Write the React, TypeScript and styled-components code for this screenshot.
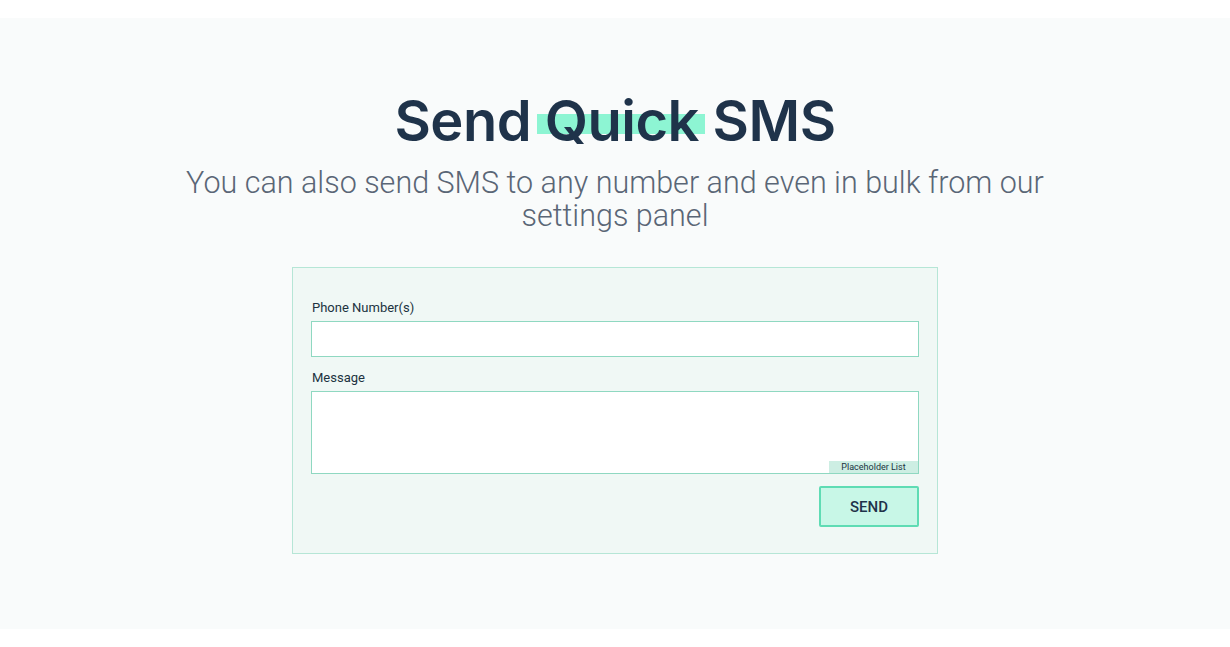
import React from 'react'
import styled, { createGlobalStyle } from 'styled-components'

const GlobalStyle = createGlobalStyle`
  body {
    margin: 0;
    background: #ffffff;
    font-family: Roboto, 'Liberation Sans', sans-serif;
  }
`

const Page = styled.div`
  padding: 18px 0;
`

const Section = styled.section`
  background: #f9fbfb;
  height: 611px;
  box-sizing: border-box;
  padding-top: 70px;
  display: flex;
  flex-direction: column;
  align-items: center;
`

const Title = styled.h1`
  position: relative;
  z-index: 0;
  margin: 0;
  font-family: Inter, 'Noto Sans', sans-serif;
  font-weight: 600;
  font-size: 56px;
  line-height: 67px;
  letter-spacing: -0.5px;
  color: #1f334a;
`

const Highlight = styled.span`
  position: relative;
  &::before {
    content: '';
    position: absolute;
    left: -8px;
    right: -6px;
    top: 27px;
    height: 20px;
    background: #8df5d3;
    z-index: -1;
  }
`

const Subtitle = styled.p`
  margin: 11px 0 0;
  width: 920px;
  text-align: center;
  font-size: 30.5px;
  font-weight: 300;
  line-height: 33px;
  color: #5a6676;
`

const Card = styled.form`
  margin-top: 35px;
  width: 646px;
  height: 287px;
  box-sizing: border-box;
  padding: 30px 18px 0;
  background: #f0f8f5;
  border: 1px solid #b6e6d6;
  display: flex;
  flex-direction: column;
`

const Label = styled.label`
  display: block;
  font-size: 13px;
  line-height: 20px;
  color: #20333f;
  margin-bottom: 3px;
  padding-left: 1px;
`

const Input = styled.input`
  display: block;
  box-sizing: border-box;
  width: 100%;
  height: 36px;
  margin: 0 0 11px;
  border: 1px solid #8fd8c1;
  background: #ffffff;
  outline: none;
`

const AreaWrap = styled.div`
  position: relative;
  height: 83px;
`

const TextArea = styled.textarea`
  display: block;
  box-sizing: border-box;
  width: 100%;
  height: 100%;
  margin: 0;
  border: 1px solid #8fd8c1;
  background: #ffffff;
  resize: none;
  outline: none;
`

const Tag = styled.span`
  position: absolute;
  right: 1px;
  bottom: 1px;
  width: 89px;
  height: 12px;
  background: #cdeee3;
  font-size: 9px;
  line-height: 12px;
  text-align: center;
  color: #20333f;
`

const Actions = styled.div`
  display: flex;
  justify-content: flex-end;
  margin-top: 12px;
`

const SendButton = styled.button`
  width: 100px;
  height: 41px;
  box-sizing: border-box;
  border: 2px solid #5fdcb4;
  border-radius: 2px;
  background: #c8f7e7;
  font-family: Roboto, 'Liberation Sans', sans-serif;
  font-size: 15px;
  font-weight: 500;
  color: #1f334a;
  cursor: pointer;
`

export default function App() {
  return (
    <Page>
      <GlobalStyle />
      <Section>
        <Title>
          Send <Highlight>Quick</Highlight> SMS
        </Title>
        <Subtitle>
          You can also send SMS to any number and even in bulk from our settings panel
        </Subtitle>
        <Card onSubmit={(e) => e.preventDefault()}>
          <Label htmlFor="phones">Phone Number(s)</Label>
          <Input id="phones" type="text" />
          <Label htmlFor="message">Message</Label>
          <AreaWrap>
            <TextArea id="message" />
            <Tag>Placeholder List</Tag>
          </AreaWrap>
          <Actions>
            <SendButton type="submit">SEND</SendButton>
          </Actions>
        </Card>
      </Section>
    </Page>
  )
}
